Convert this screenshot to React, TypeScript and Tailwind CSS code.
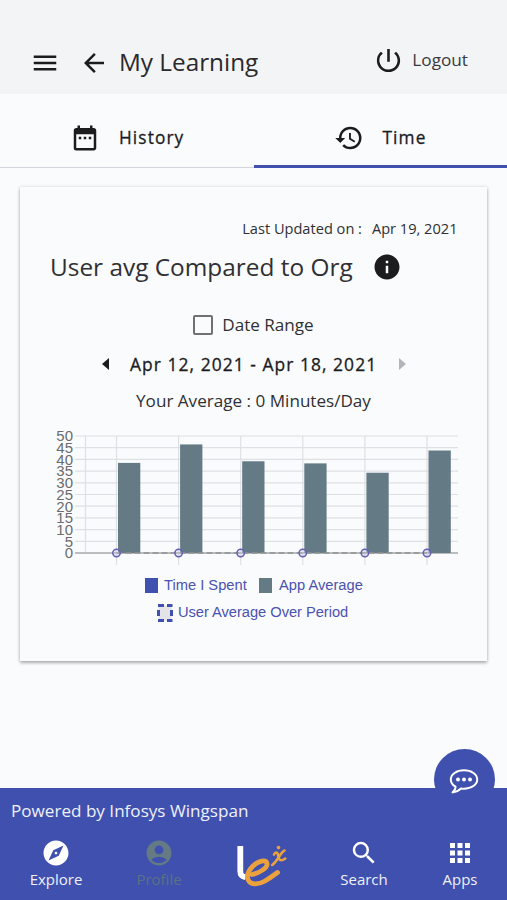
import React from 'react';
import {
  MdAccountCircle,
  MdApps,
  MdArrowBack,
  MdDateRange,
  MdExplore,
  MdHistory,
  MdInfo,
  MdMenu,
  MdPowerSettingsNew,
  MdSearch,
} from 'react-icons/md';

const averages = [38.5, 46.4, 39.2, 38.3, 34.3, 43.8];
const ticks = [50, 45, 40, 35, 30, 25, 20, 15, 10, 5, 0];

const BASE = 123;
const STEP = 2.34;
const yFor = (value: number) => BASE - value * STEP;
const xFor = (index: number) => 66.5 + index * 62.1;

function Header() {
  return (
    <header className="flex h-[94px] shrink-0 items-start bg-[#f3f4f6] pl-[30px] pr-[39px] text-[#1c1c1f]">
      <MdMenu className="mt-[48px] size-[30px]" />
      <MdArrowBack className="ml-[19px] mt-[48px] size-[30px]" />
      <h1 className="ml-[10px] mt-[45px] whitespace-nowrap text-[24.3px] leading-[34px] text-[#2a2a2d]">My Learning</h1>
      <button className="ml-auto mt-[44px] flex items-center text-[17.2px] leading-[30px] text-[#3a3a3d]">
        <MdPowerSettingsNew className="mr-[8px] mt-px size-[31px] text-[#1c1c1f]" />
        Logout
      </button>
    </header>
  );
}

function Tabs() {
  return (
    <nav className="grid h-[74px] shrink-0 grid-cols-2 text-[17.3px] tracking-[1.1px] text-[#1c1c1f] [-webkit-text-stroke:0.3px]">
      <div className="flex items-center border-b border-[#d3d5de] pl-[69.5px] pt-[15px]">
        <MdDateRange className="mr-[19.5px] size-[30px]" strokeWidth="0" />
        History
      </div>
      <div className="flex items-center border-b-[3px] border-[#4050ae] pl-[80px] pt-[17px]">
        <MdHistory className="mr-[19px] size-[30px]" strokeWidth="0" />
        Time
      </div>
    </nav>
  );
}

function Chart() {
  return (
    <svg className="ml-[30px] block h-[146px] w-[418px] overflow-visible" viewBox="0 0 418 146">
      <g stroke="#dfe0e3" strokeWidth="1.2">
        {ticks.slice(0, -1).map((t) => (
          <line key={t} x1="25" x2="408" y1={yFor(t)} y2={yFor(t)} />
        ))}
        <line x1="35.5" x2="35.5" y1="6" y2="123" />
        {averages.map((_, i) => (
          <line key={i} x1={xFor(i)} x2={xFor(i)} y1="6" y2="135" />
        ))}
      </g>
      <line x1="25" x2="408" y1={BASE} y2={BASE} stroke="#a6a8aa" strokeWidth="1.3" />
      {averages.map((v, i) => (
        <rect key={i} x={xFor(i) + 1.5} y={yFor(v)} width="22.3" height={v * STEP} fill="#647b86" />
      ))}
      <line x1={xFor(0)} x2={xFor(5)} y1={BASE} y2={BASE} stroke="#8f9492" strokeWidth="1.5" strokeDasharray="6 3" />
      {averages.map((_, i) => (
        <circle key={i} cx={xFor(i)} cy={BASE} r="3.7" fill="#c9cbe0" fillOpacity="0.35" stroke="#6560b4" strokeWidth="1.5" />
      ))}
      <g fill="#6b6b6d" fontFamily="Liberation Sans, sans-serif" fontSize="15" textAnchor="end">
        {ticks.map((t) => (
          <text key={t} x="23" y={yFor(t) + 5.3}>{t}</text>
        ))}
      </g>
    </svg>
  );
}

function Legend() {
  return (
    <div className="font-['Liberation_Sans',sans-serif] text-[14.7px] leading-[27px] text-[#4a52b0]">
      <div className="flex items-center pl-[125px]">
        <span className="mr-[6px] h-[15px] w-[13px] bg-[#4050ae]" />
        <span className="w-[95px] whitespace-nowrap">Time I Spent</span>
        <span className="mr-[7px] h-[15px] w-[13px] bg-[#647b86]" />
        <span className="whitespace-nowrap">App Average</span>
      </div>
      <div className="flex items-center pl-[137px]">
        <svg className="mr-[5px] h-[18px] w-[16px]" viewBox="0 0 16 18">
          <rect x="1.5" y="1.5" width="13" height="15" fill="#e3e3e8" />
          <path
            d="M1 1.500h6M10 1.500h5.500M1 16.500h6M10 16.500h5.500M1.500 6v6M14.500 6v6"
            fill="none"
            stroke="#4050ae"
            strokeWidth="3"
          />
        </svg>
        <span className="whitespace-nowrap tracking-[-0.04px]">User Average Over Period</span>
      </div>
    </div>
  );
}

function TimeCard() {
  return (
    <section className="mx-[20px] mt-[19px] h-[474px] shrink-0 bg-[#fafbfd] text-[#303033] shadow-[0_2px_3px_rgba(0,0,0,0.28),0_0_4px_rgba(0,0,0,0.12)]">
      <div className="flex justify-end pr-[29.5px] pt-[30px] text-[14.6px] leading-[22px]">
        <span className="mr-[10px]">Last Updated on :</span>
        <span>Apr 19, 2021</span>
      </div>
      <div className="mt-[11px] flex h-[34px] items-center pl-[30px]">
        <h2 className="whitespace-nowrap text-[24.4px]">User avg Compared to Org</h2>
        <MdInfo className="ml-[19.5px] size-[30px] text-[#1c1c1f]" />
      </div>
      <label className="mt-[28px] flex h-[26px] items-center justify-center text-[17.1px]">
        <span className="mr-[9px] size-[20px] rounded-[2px] border-[2.5px] border-[#707073]" />
        Date Range
      </label>
      <div className="mt-[12px] flex h-[28px] items-center pl-[82px]">
        <svg className="h-[12px] w-[7px] text-[#1c1c1f]" viewBox="0 0 7 12">
          <path d="M7 0v12L0 6z" fill="currentColor" />
        </svg>
        <span className="ml-[21px] w-[248px] whitespace-nowrap text-[17.4px] tracking-[1.06px] text-[#1c1c1f] [-webkit-text-stroke:0.3px]">
          Apr 12, 2021 - Apr 18, 2021
        </span>
        <svg className="ml-[21px] h-[12px] w-[7px] text-[#b4b5b8]" viewBox="0 0 7 12">
          <path d="M0 0v12l7-6z" fill="currentColor" />
        </svg>
      </div>
      <p className="mt-[10px] text-center text-[17.1px] leading-[26px]">Your Average : 0 Minutes/Day</p>
      <div className="mt-[16px]">
        <Chart />
        <div className="-mt-[4px]">
          <Legend />
        </div>
      </div>
    </section>
  );
}

function LexLogo() {
  return (
    <svg className="h-[56px] w-[56px]" viewBox="0 0 56 56" fill="none" strokeLinecap="round">
      <path d="M6.300 11v25c0 4 1.500 5.600 5.200 6" stroke="#fff" strokeWidth="5.800" strokeLinecap="butt" />
      <path
        d="M18 39.500C25 38 34 33 33 28.500C32 24 24 26 19 31C14 36 12 41 14.500 45.500C17 50.500 25 49.500 31 46C36 43 40 40 43.500 37.500"
        stroke="#eba23c"
        strokeWidth="4.800"
      />
      <path d="M40 19.500C41 17 43.500 16.500 44 20C44.500 24 46 27.500 51.300 23.500M50.500 15.500C47 16.500 43 27 38.200 30" stroke="#eba23c" strokeWidth="2.600" />
      <circle cx="44.500" cy="12.600" r="1.800" fill="#eba23c" />
    </svg>
  );
}

function ChatButton() {
  return (
    <button className="absolute -top-[39px] right-[12.500px] flex size-[61px] items-center justify-center rounded-full bg-[#4050ae]">
      <svg className="mt-[2px] size-[30px]" viewBox="0 0 30 30" fill="none">
        <path
          d="M15 4.300c-7.500 0-13.200 4-13.200 9.200c0 3 1.800 5.500 4.700 7.200c.2 2.200-1 4-3 5.700c3.800-.4 6.500-1.800 8.500-4c1 .2 2 .3 3 .3c7.500 0 13.200-4 13.200-9.200S22.500 4.300 15 4.300z"
          stroke="#fff"
          strokeWidth="2"
          strokeLinejoin="round"
        />
        <g fill="#fff">
          <circle cx="9" cy="13.500" r="2" />
          <circle cx="15" cy="13.500" r="2" />
          <circle cx="21" cy="13.500" r="2" />
        </g>
      </svg>
    </button>
  );
}

function Footer() {
  return (
    <footer className="relative mt-auto h-[112px] shrink-0 bg-[#4050ae] text-[#eef0fa]">
      <ChatButton />
      <p className="h-[47px] pl-[11px] pt-[10px] text-[17.1px] leading-[26px]">Powered by Infosys Wingspan</p>
      <nav className="flex items-start pl-[4px] text-[15px] leading-[20px]">
        <div className="flex w-[104px] flex-col items-center pt-[3px]">
          <MdExplore className="size-[30px] text-white" />
          <span className="mt-px">Explore</span>
        </div>
        <div className="flex w-[102px] flex-col items-center pt-[3px] text-[#5b7187]">
          <MdAccountCircle className="size-[30px] text-[#647b86]" />
          <span className="mt-px">Profile</span>
        </div>
        <div className="flex w-[103px] justify-center">
          <LexLogo />
        </div>
        <div className="flex w-[102px] flex-col items-center pt-[3px]">
          <MdSearch className="size-[30px] text-white" />
          <span className="mt-px">Search</span>
        </div>
        <div className="flex w-[90px] flex-col items-center pt-[3px]">
          <MdApps className="size-[30px] text-white" />
          <span className="mt-px">Apps</span>
        </div>
      </nav>
    </footer>
  );
}

export default function App() {
  return (
    <div className="flex h-[900px] w-[507px] flex-col overflow-hidden bg-[#fafbfd] font-['Open_Sans',sans-serif]">
      <Header />
      <Tabs />
      <TimeCard />
      <Footer />
    </div>
  );
}
